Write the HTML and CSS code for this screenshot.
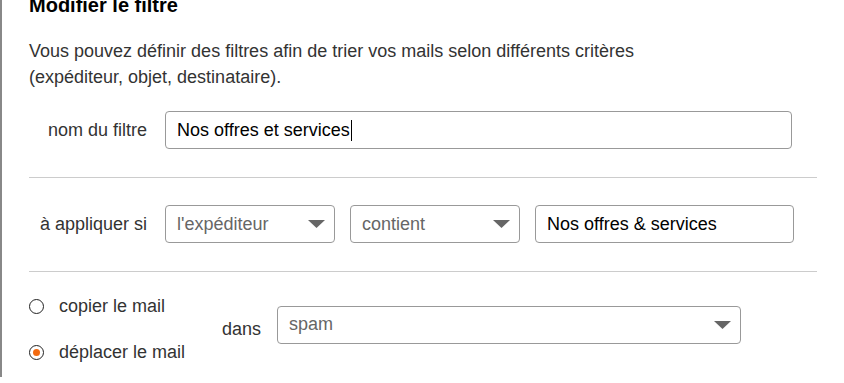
FILE: index.html
```html
<!DOCTYPE html>
<html lang="fr">
<head>
    <meta charset="UTF-8">
    <meta name="viewport" content="width=device-width, initial-scale=1.0">
    <title>Modifier le filtre</title>
    <link rel="stylesheet" href="styles.css">
</head>
<body>
    <div class="panel">
        <h2>Modifier le filtre</h2>
        <p class="intro">Vous pouvez définir des filtres afin de trier vos mails selon différents critères<br/>(expéditeur, objet, destinataire).</p>

        <div class="row">
            <label class="row-label">nom du filtre</label>
            <div class="field name-field">Nos offres et services<span class="caret"></span></div>
        </div>

        <div class="row">
            <label class="row-label">à appliquer si</label>
            <div class="select small">
                <span>l'expéditeur</span>
                <svg class="arrow" width="17" height="8" viewBox="0 0 17 8"><path d="M0 0 H17 L8.5 8 Z" fill="#666"/></svg>
            </div>
            <div class="select small">
                <span>contient</span>
                <svg class="arrow" width="17" height="8" viewBox="0 0 17 8"><path d="M0 0 H17 L8.5 8 Z" fill="#666"/></svg>
            </div>
            <div class="field value-field">Nos offres &amp; services</div>
        </div>

        <div class="row last">
            <div class="radios">
                <label class="radio"><input type="radio" name="action"> copier le mail</label>
                <label class="radio"><input type="radio" name="action" checked> déplacer le mail</label>
            </div>
            <span class="dans">dans</span>
            <div class="select wide">
                <span>spam</span>
                <svg class="arrow" width="17" height="8" viewBox="0 0 17 8"><path d="M0 0 H17 L8.5 8 Z" fill="#666"/></svg>
            </div>
        </div>
    </div>
</body>
</html>
```

FILE: styles.css
```css
body {
    font-family: "Liberation Sans", Arial, sans-serif;
    margin: 0;
    background-color: white;
    color: #333;
}
.panel {
    border-left: 2px solid #888;
    padding-left: 27px;
    width: 788px;
    min-height: 383px;
}
h2 {
    font-size: 20px;
    line-height: 22px;
    font-weight: bold;
    color: #000;
    margin: -6px 0 0;
}
.intro {
    font-size: 18px;
    line-height: 26px;
    margin: 22px 0 21px;
}
.row {
    display: flex;
    align-items: center;
    gap: 15px;
    padding-bottom: 28px;
    border-bottom: 1px solid #ccc;
    margin-bottom: 27px;
}
.row.last {
    border-bottom: none;
    padding-bottom: 0;
    margin-bottom: 0;
    margin-top: -3px;
    gap: 0;
}
.row-label {
    width: 118px;
    margin-right: 3px;
    text-align: right;
    font-size: 18px;
}
.field, .select {
    box-sizing: border-box;
    height: 38px;
    border: 1px solid #999;
    border-radius: 4px;
    padding: 0 11px;
    font-size: 18px;
    display: flex;
    align-items: center;
}
.field {
    color: #000;
}
.name-field {
    width: 627px;
}
.value-field {
    width: 259px;
}
.caret {
    display: inline-block;
    width: 1px;
    height: 21px;
    background-color: #000;
    margin-left: 1px;
}
.select {
    justify-content: space-between;
    color: #666;
    padding-right: 9px;
}
.select.small {
    width: 170px;
}
.select.wide {
    width: 464px;
    margin-bottom: 10px;
}
.radios {
    display: flex;
    flex-direction: column;
    gap: 25px;
    width: 193px;
}
.radio {
    display: flex;
    align-items: center;
    font-size: 18px;
    height: 21px;
}
.radio input {
    appearance: none;
    -webkit-appearance: none;
    box-sizing: border-box;
    width: 15px;
    height: 15px;
    margin: 0 15px 0 0;
    border: 1.5px solid #222;
    border-radius: 50%;
    display: grid;
    place-content: center;
}
.radio input:checked::before {
    content: "";
    width: 7px;
    height: 7px;
    border-radius: 50%;
    background-color: #f26a10;
}
.dans {
    font-size: 18px;
    width: 55px;
}
```
